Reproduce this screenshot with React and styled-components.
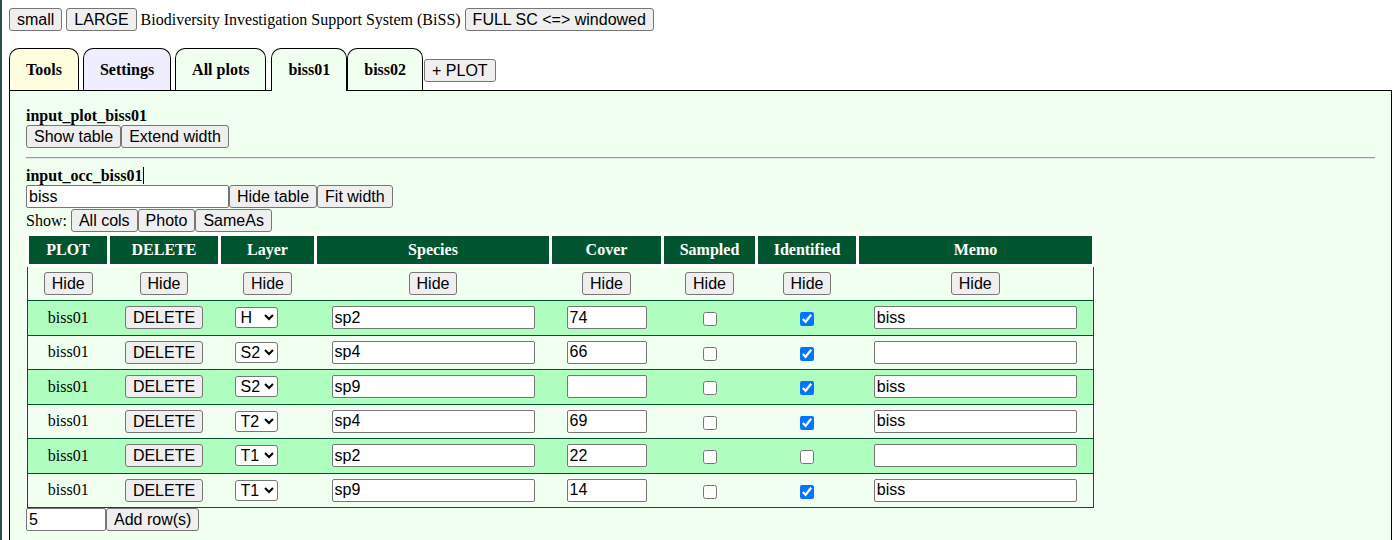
import React from "react";
import styled, { createGlobalStyle } from "styled-components";

const GlobalStyle = createGlobalStyle`
  html {
    border-left: 2px solid #2f4f4f;
    background: #fff;
  }
  body {
    margin: 8px 8px 0 7px;
    font-family: "Liberation Serif", "Times New Roman", serif;
    font-size: 16px;
    color: #000;
  }
`;

const sans = `"Liberation Sans", Arial, sans-serif`;
const dark = "#00552f";
const light = "#b0fdc0";
const honey = "#f0fff0";

const TopBar = styled.div`
  display: flex;
  align-items: center;
  gap: 4px;
  height: 23px;
`;

const Btn = styled.button`
  font-family: ${sans};
  font-size: 16px;
  height: 23px;
  box-sizing: border-box;
  padding: 0 7px;
  background: #efefef;
  border: 1px solid #767676;
  border-radius: 3px;
  color: #000;
  line-height: 19px;
  white-space: nowrap;
`;

const TabBar = styled.div`
  display: flex;
  align-items: flex-end;
  margin-top: 17px;
`;

const Tab = styled.div`
  height: ${({ $active }) => ($active ? "43px" : "42px")};
  margin-bottom: ${({ $active }) => ($active ? "-1px" : "0")};
  margin-right: ${({ $gap }) => $gap}px;
  position: relative;
  z-index: ${({ $active }) => ($active ? 1 : 0)};
  box-sizing: border-box;
  padding: 0 16px;
  display: flex;
  align-items: center;
  border: 1px solid #000;
  border-bottom: none;
  border-radius: 10px 10px 0 0;
  background: ${({ $bg }) => $bg};
  font-weight: bold;
`;

const PlotBtn = styled(Btn)`
  margin-bottom: 8px;
  margin-left: 1px;
`;

const Panel = styled.div`
  border: 1px solid #000;
  background: ${honey};
  padding: 16px 16px 40px;
`;

const Label = styled.div`
  font-weight: bold;
  line-height: 18px;
`;

const Caret = styled.span`
  display: inline-block;
  width: 1px;
  height: 17px;
  background: #000;
  vertical-align: -3px;
  margin-left: 1px;
`;

const Row = styled.div`
  display: flex;
  align-items: center;
  margin-top: ${({ $mt }) => $mt || 0}px;
`;

const ShowLabel = styled.span`
  margin-right: 4px;
`;

const Rule = styled.hr`
  margin: 9px 0 8px;
  border: none;
  border-top: 1px solid #9a9a9a;
  border-bottom: 1px solid #e4e4e4;
`;

const TextInput = styled.input`
  font-family: ${sans};
  font-size: 16px;
  width: ${({ $w }) => $w}px;
  height: 23px;
  box-sizing: border-box;
  padding: 1px 2px;
  border: 1px solid #767676;
  border-radius: 2px;
  background: #fff;
  color: #000;
  margin: 0;
`;

const Select = styled.select`
  font-family: ${sans};
  font-size: 16px;
  height: 21px;
  padding: 0 0 0 1px;
  border: 1px solid #767676;
  border-radius: 3px;
  background: #fff;
  color: #000;
`;

const Check = styled.input`
  width: 14px;
  height: 14px;
  margin: 0;
  vertical-align: middle;
`;

const Table = styled.table`
  border-collapse: collapse;
  table-layout: fixed;
  margin-top: 1px;
  background: #fff;
`;

const Col = styled.col`
  width: ${({ $w }) => $w}px;
`;

const Th = styled.th`
  background: ${dark};
  color: #fff;
  border: 3px solid #fff;
  padding: 0;
  height: 28px;
  font-weight: bold;
  text-align: center;
`;

const Tr = styled.tr`
  height: ${({ $h }) => $h}px;
  background: ${({ $bg }) => $bg};
`;

const Td = styled.td`
  padding: 0 0 0 ${({ $pl }) => $pl || 0}px;
  text-align: ${({ $pl }) => ($pl ? "left" : "center")};
  border-top: 1px solid ${dark};
  border-bottom: 1px solid ${dark};
  &:first-child {
    border-left: 1px solid ${dark};
  }
  &:last-child {
    border-right: 1px solid ${dark};
  }
`;

const columns = [
  { name: "PLOT", w: 81 },
  { name: "DELETE", w: 111 },
  { name: "Layer", w: 96 },
  { name: "Species", w: 235 },
  { name: "Cover", w: 112 },
  { name: "Sampled", w: 94 },
  { name: "Identified", w: 101 },
  { name: "Memo", w: 236 },
];

const rows = [
  { layer: "H", sp: "sp2", cover: "74", id: true, memo: "biss" },
  { layer: "S2", sp: "sp4", cover: "66", id: true, memo: "" },
  { layer: "S2", sp: "sp9", cover: "", id: true, memo: "biss" },
  { layer: "T2", sp: "sp4", cover: "69", id: true, memo: "biss" },
  { layer: "T1", sp: "sp2", cover: "22", id: false, memo: "" },
  { layer: "T1", sp: "sp9", cover: "14", id: true, memo: "biss" },
];

const tabs = [
  { label: "Tools", bg: "#ffffe0", gap: 4 },
  { label: "Settings", bg: "#eeeeff", gap: 4 },
  { label: "All plots", bg: honey, gap: 5 },
  { label: "biss01", bg: honey, gap: 0, active: true },
  { label: "biss02", bg: honey, gap: 0 },
];

const App = () => {
  return (
    <>
      <GlobalStyle />
      <TopBar>
        <Btn>small</Btn>
        <Btn>LARGE</Btn>
        <span>Biodiversity Investigation Support System (BiSS)</span>
        <Btn>FULL SC &lt;=&gt; windowed</Btn>
      </TopBar>
      <TabBar>
        {tabs.map((t) => (
          <Tab key={t.label} $bg={t.bg} $gap={t.gap} $active={t.active}>
            {t.label}
          </Tab>
        ))}
        <PlotBtn>+ PLOT</PlotBtn>
      </TabBar>
      <Panel>
        <Label>input_plot_biss01</Label>
        <Row>
          <Btn>Show table</Btn>
          <Btn>Extend width</Btn>
        </Row>
        <Rule />
        <Label>
          input_occ_biss01
          <Caret />
        </Label>
        <Row>
          <TextInput $w={203} defaultValue="biss" />
          <Btn>Hide table</Btn>
          <Btn>Fit width</Btn>
        </Row>
        <Row $mt={1}>
          <ShowLabel>Show:</ShowLabel>
          <Btn>All cols</Btn>
          <Btn>Photo</Btn>
          <Btn>SameAs</Btn>
        </Row>
        <Table>
          <colgroup>
            {columns.map((c) => (
              <Col key={c.name} $w={c.w} />
            ))}
          </colgroup>
          <thead>
            <tr>
              {columns.map((c) => (
                <Th key={c.name}>{c.name}</Th>
              ))}
            </tr>
          </thead>
          <tbody>
            <Tr $h={35} $bg={honey}>
              {columns.map((c) => (
                <Td key={c.name}>
                  <Btn>Hide</Btn>
                </Td>
              ))}
            </Tr>
            {rows.map((r, i) => (
              <Tr key={i} $h={34.5} $bg={i % 2 === 0 ? light : honey}>
                <Td>biss01</Td>
                <Td>
                  <Btn>DELETE</Btn>
                </Td>
                <Td $pl={15}>
                  <Select defaultValue={r.layer}>
                    <option>H</option>
                    <option>S1</option>
                    <option>S2</option>
                    <option>T1</option>
                    <option>T2</option>
                  </Select>
                </Td>
                <Td>
                  <TextInput $w={203} defaultValue={r.sp} />
                </Td>
                <Td>
                  <TextInput $w={80} defaultValue={r.cover} />
                </Td>
                <Td>
                  <Check type="checkbox" />
                </Td>
                <Td>
                  <Check type="checkbox" defaultChecked={r.id} />
                </Td>
                <Td>
                  <TextInput $w={203} defaultValue={r.memo} />
                </Td>
              </Tr>
            ))}
          </tbody>
        </Table>
        <Row>
          <TextInput $w={80} defaultValue="5" />
          <Btn>Add row(s)</Btn>
        </Row>
      </Panel>
    </>
  );
};

export default App;
